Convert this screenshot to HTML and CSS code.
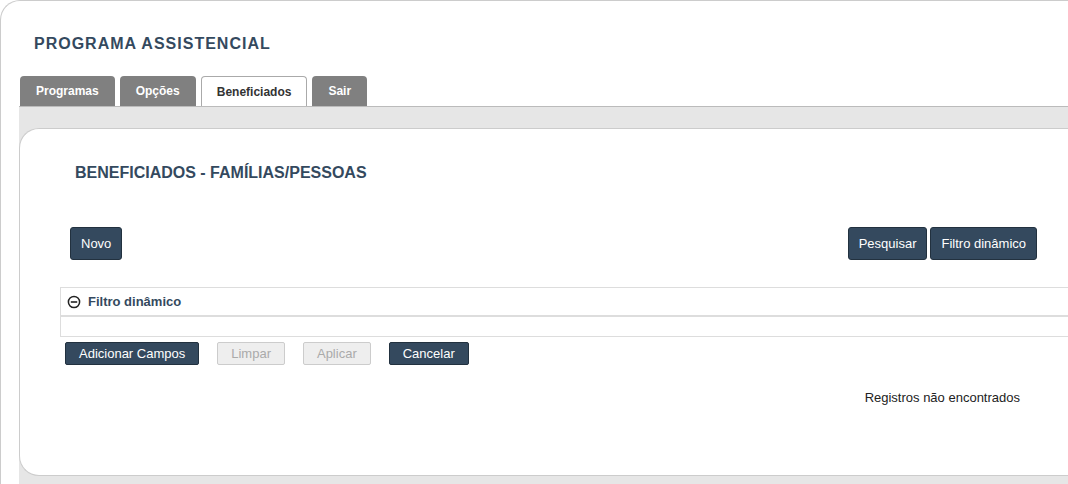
FILE: index.html
```html
<!DOCTYPE html>
<html lang="pt-BR">
<head>
<meta charset="utf-8">
<title>Programa Assistencial</title>
<link rel="stylesheet" href="styles.css">
</head>
<body>
<div class="page">
  <h1 class="title">PROGRAMA ASSISTENCIAL</h1>
  <div class="tabs">
    <a class="tab">Programas</a>
    <a class="tab">Opções</a>
    <a class="tab active">Beneficiados</a>
    <a class="tab">Sair</a>
  </div>
  <div class="panel">
    <div class="card">
      <h2 class="heading">BENEFICIADOS - FAMÍLIAS/PESSOAS</h2>
      <div class="toolbar">
        <button class="btn">Novo</button>
        <div class="toolbar-right">
          <button class="btn">Pesquisar</button>
          <button class="btn">Filtro dinâmico</button>
        </div>
      </div>
      <div class="filter">
        <div class="filter-head">
          <svg class="filter-icon" width="14" height="14" viewBox="0 0 14 14"><circle cx="7" cy="7" r="5.6" fill="none" stroke="#222" stroke-width="1.5"/><line x1="3.8" y1="7" x2="10.2" y2="7" stroke="#222" stroke-width="1.6"/></svg>
          <span>Filtro dinâmico</span>
        </div>
        <div class="filter-body"></div>
      </div>
      <div class="filter-actions">
        <button class="sbtn">Adicionar Campos</button>
        <button class="sbtn disabled">Limpar</button>
        <button class="sbtn disabled">Aplicar</button>
        <button class="sbtn">Cancelar</button>
      </div>
      <div class="empty">Registros não encontrados</div>
    </div>
  </div>
</div>
</body>
</html>
```

FILE: styles.css
```css
html, body {
  margin: 0;
  padding: 0;
  background: #fff;
  overflow: hidden;
  font-family: "Liberation Sans", Arial, sans-serif;
}
.page {
  width: 1120px;
  height: 484px;
  border-left: 1px solid #ccc;
  border-top: 1px solid #ccc;
  border-top-left-radius: 20px;
  box-sizing: border-box;
  overflow: hidden;
}
.title {
  margin: 0;
  padding: 34px 0 0 33px;
  height: 75px;
  box-sizing: border-box;
  font-size: 16px;
  line-height: 18px;
  letter-spacing: 1px;
  font-weight: bold;
  color: #34495e;
}
.tabs {
  display: flex;
  gap: 5px;
  margin-left: 19px;
  height: 30px;
  align-items: flex-end;
}
.tab {
  height: 30px;
  box-sizing: border-box;
  padding: 0 16px;
  display: flex;
  align-items: center;
  background: #808080;
  color: #fff;
  font-size: 12px;
  font-weight: bold;
  border-radius: 4px 4px 0 0;
}
.tab.active {
  background: #fff;
  color: #333;
  padding: 0 15px;
  border: 1px solid #aaa;
  border-bottom: none;
}
.panel {
  margin-left: 18px;
  background: #e6e6e6;
  border-top: 1px solid #bbb;
  padding-top: 21px;
  height: 400px;
}
.card {
  background: #fff;
  border: 1px solid #ccc;
  border-right: none;
  border-radius: 20px 0 0 20px;
  height: 348px;
  box-sizing: border-box;
  padding: 35px 0 0 40px;
}
.heading {
  margin: 0 0 0 15px;
  font-size: 16px;
  line-height: 18px;
  font-weight: bold;
  color: #34495e;
}
.toolbar {
  display: flex;
  justify-content: space-between;
  margin: 45px 0 0 10px;
  width: 967px;
}
.toolbar-right {
  display: flex;
  gap: 3px;
}
.btn {
  height: 33px;
  padding: 0 10px;
  background: #34495e;
  border: 1px solid #22313f;
  border-radius: 3px;
  color: #fff;
  font-family: inherit;
  font-size: 13px;
}
.filter {
  margin-top: 27px;
  border-top: 1px solid #ddd;
  border-left: 1px solid #ddd;
}
.filter-head {
  height: 27px;
  display: flex;
  align-items: center;
  gap: 7px;
  padding-left: 6px;
  border-bottom: 2px solid #ddd;
  font-size: 13px;
  font-weight: bold;
  color: #34495e;
}
.filter-icon {
  display: block;
}
.filter-body {
  height: 19px;
  border-bottom: 1px solid #ddd;
}
.filter-actions {
  display: flex;
  gap: 18px;
  margin: 5px 0 0 5px;
}
.sbtn {
  height: 23px;
  padding: 0 13px;
  background: #34495e;
  border: 1px solid #22313f;
  border-radius: 2px;
  color: #fff;
  font-family: inherit;
  font-size: 13px;
}
.sbtn.disabled {
  background: #eee;
  border-color: #ccc;
  color: #aaa;
}
.empty {
  width: 960px;
  text-align: right;
  margin-top: 25px;
  font-size: 13px;
  color: #222;
}
```
